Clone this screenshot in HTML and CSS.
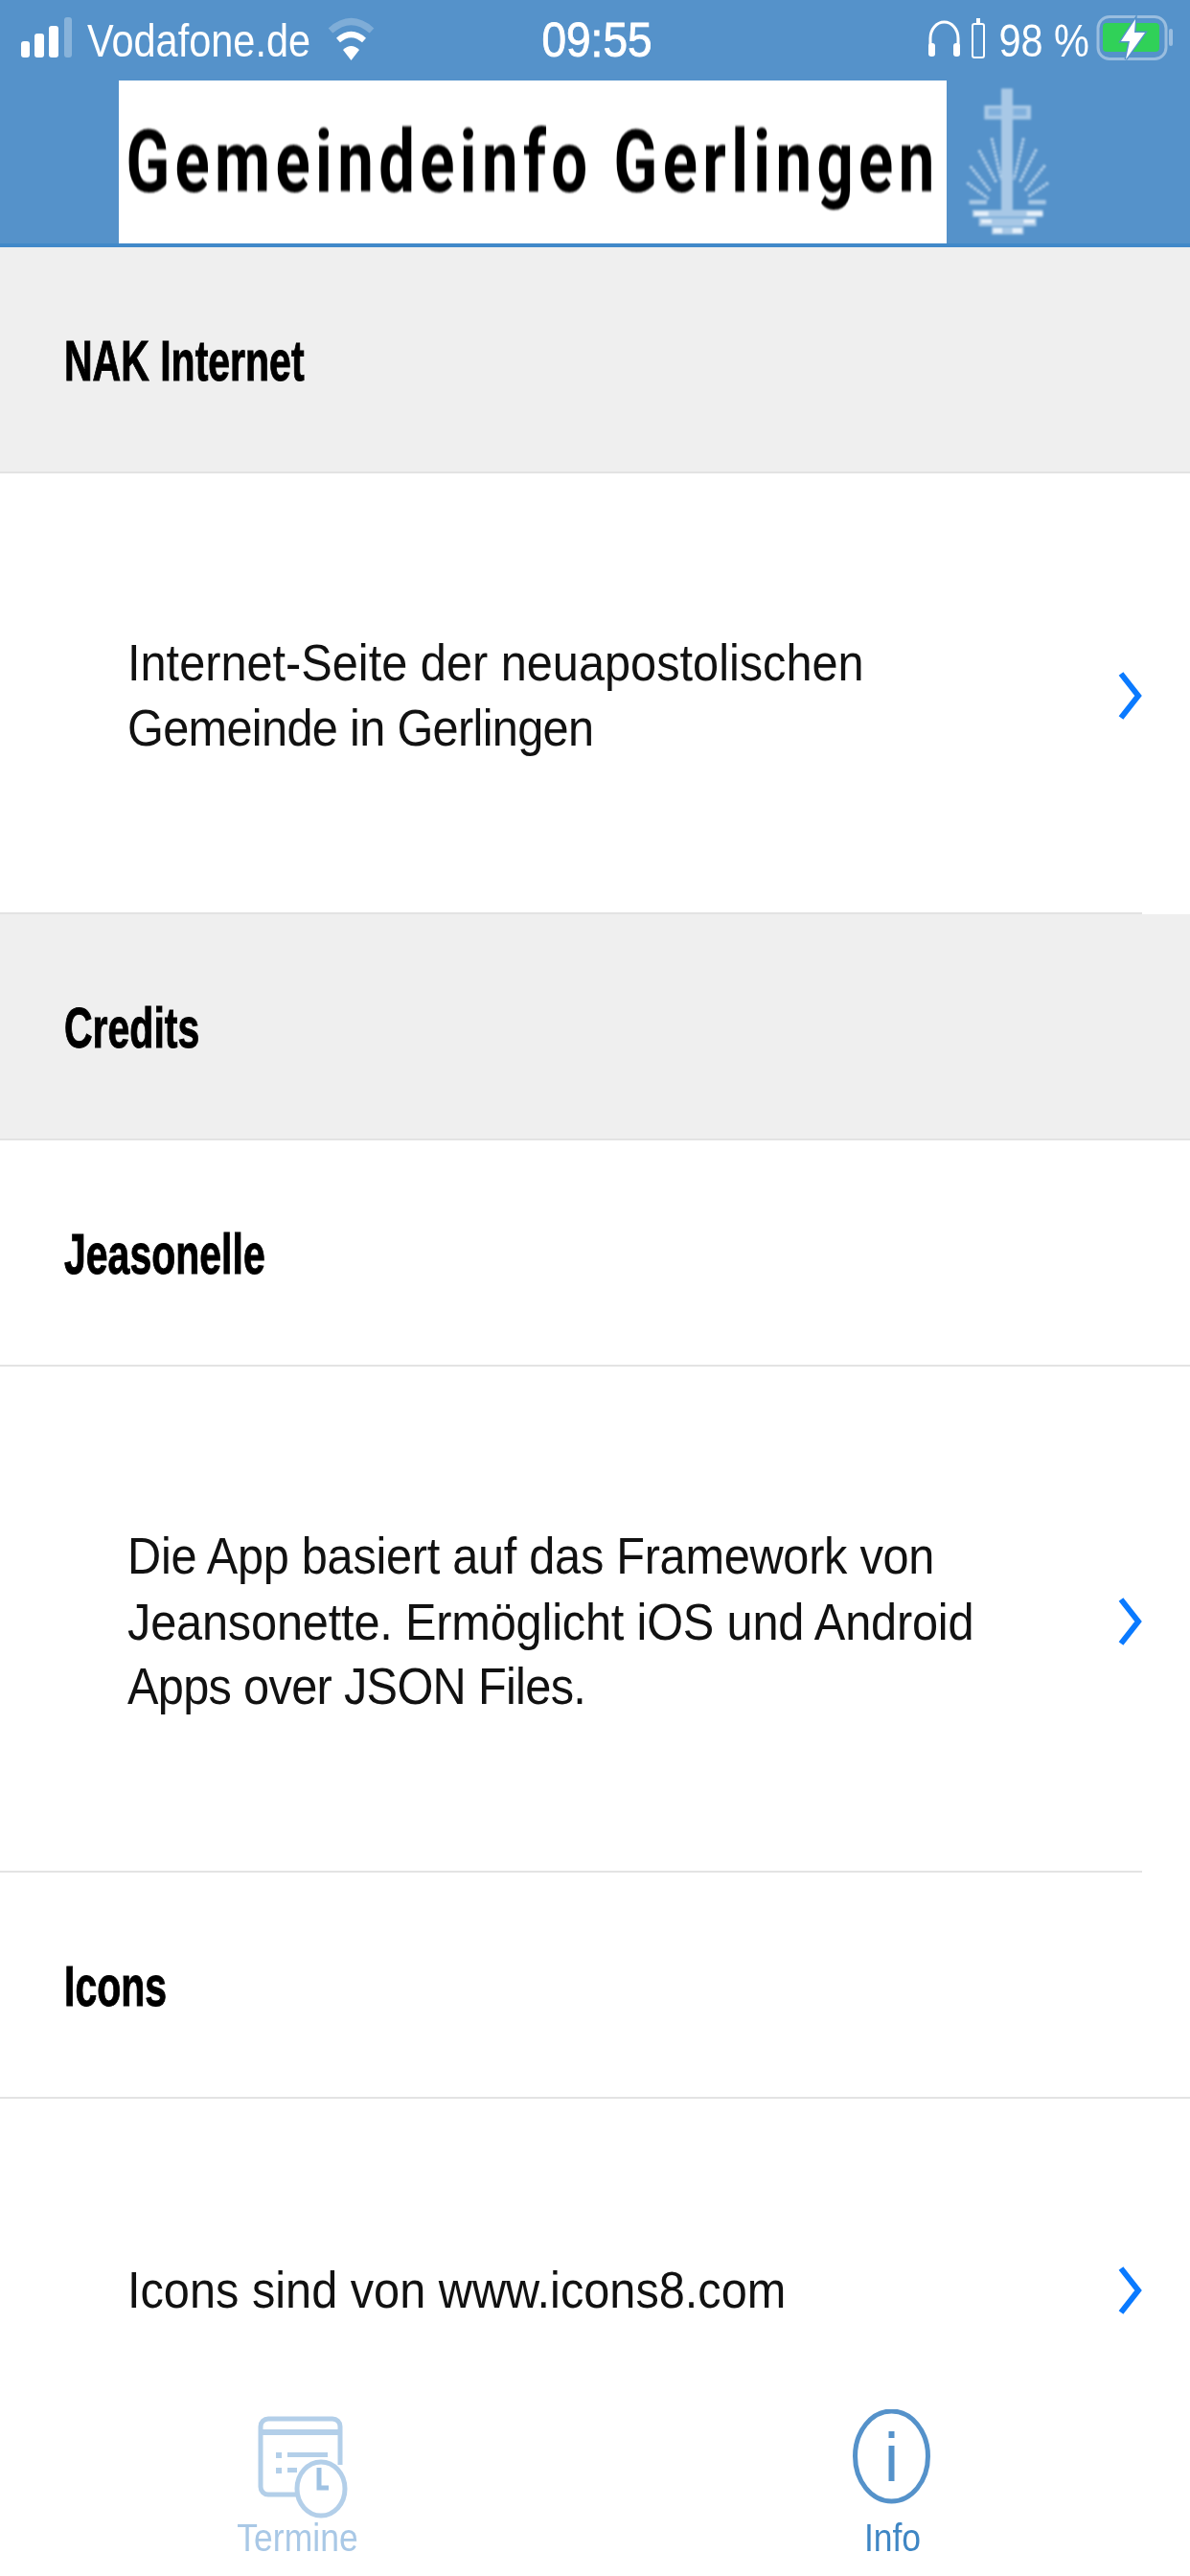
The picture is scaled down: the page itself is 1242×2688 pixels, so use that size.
FILE: index.html
```html
<!DOCTYPE html>
<html lang="de">
<head>
  <meta charset="UTF-8">
  <title>Gemeindeinfo Gerlingen</title>
  <link rel="stylesheet" href="styles.css">
</head>
<body>
  <div class="screen">
    <header class="header">
      <div class="status-bar">
        <div class="status-left">
          <svg class="signal" viewBox="0 0 53 48" width="53" height="48">
            <rect x="0" y="26" width="9" height="17" rx="3" fill="#fff"/>
            <rect x="14" y="18" width="10" height="25" rx="3" fill="#fff"/>
            <rect x="29" y="10" width="10" height="33" rx="3" fill="#fff"/>
            <rect x="45" y="1" width="8" height="42" rx="3" fill="#fff" opacity="0.3"/>
          </svg>
          <span class="status-text carrier">Vodafone.de</span>
          <svg class="wifi" viewBox="0 0 49 48" width="49" height="48">
            <path d="M3 15 Q24.5 -4 46 15" fill="none" stroke="#fff" stroke-width="7" opacity="0.25"/>
            <path d="M11 25 Q24.5 13 38 25" fill="none" stroke="#fff" stroke-width="6"/>
            <path d="M16 35 Q24.5 27 33 35 L24.5 46 Z" fill="#fff"/>
          </svg>
        </div>
        <span class="status-text time">09:55</span>
        <div class="status-right">
          <svg class="headphones" viewBox="0 0 35 48" width="35" height="48">
            <path d="M3 38 V23 a14.5 17 0 0 1 29 0 V38" fill="none" stroke="#fff" stroke-width="3"/>
            <rect x="1" y="28" width="7" height="14" rx="3" fill="#fff"/>
            <rect x="27" y="28" width="7" height="14" rx="3" fill="#fff"/>
          </svg>
          <svg class="small-battery" viewBox="0 0 14 48" width="14" height="48">
            <rect x="5" y="2" width="4" height="6" fill="#fff"/>
            <rect x="1" y="8" width="12" height="35" rx="2" fill="none" stroke="#fff" stroke-width="2"/>
          </svg>
          <span class="status-text percent">98 %</span>
          <svg class="battery" viewBox="0 0 80 50" width="80" height="50">
            <rect x="2" y="1.5" width="71" height="44" rx="12" fill="none" stroke="#fff" stroke-width="3" opacity="0.4"/>
            <rect x="7" y="8" width="59" height="30" rx="4" fill="#30d158"/>
            <rect x="76" y="14" width="4" height="18" rx="2" fill="#fff" opacity="0.4"/>
            <path d="M41 4 L26 27 L35 27 L31 46 L51 18 L40 18 Z" fill="#fff" stroke="#5592ca" stroke-width="3" paint-order="stroke"/>
          </svg>
        </div>
      </div>
      <div class="logo-row">
        <div class="logo"><span class="logo-text">Gemeindeinfo Gerlingen</span></div>
        <svg class="emblem" viewBox="0 0 360 510" width="120" height="170">
          <g fill="#a8c8e6">
            <rect x="165" y="25" width="36" height="380"/>
            <rect x="112" y="78" width="146" height="44"/>
          </g>
          <rect x="125" y="88" width="40" height="22" fill="#7fafdc"/>
          <rect x="202" y="88" width="42" height="22" fill="#7fafdc"/>
          <g fill="none" stroke="#b4d0ea" stroke-width="9" stroke-dasharray="10 3">
            <path d="M135 180 L165 310"/>
            <path d="M235 180 L205 310"/>
            <path d="M95 218 L150 320"/>
            <path d="M275 215 L222 320"/>
            <path d="M68 268 L130 345"/>
            <path d="M302 265 L240 345"/>
            <path d="M58 320 L125 370"/>
            <path d="M312 320 L248 365"/>
          </g>
          <g fill="#a8c8e6">
            <rect x="65" y="374" width="55" height="14"/>
            <rect x="250" y="374" width="55" height="14"/>
            <rect x="75" y="405" width="220" height="22"/>
            <rect x="95" y="430" width="180" height="26"/>
            <rect x="135" y="458" width="100" height="24"/>
          </g>
          <g fill="#e6f0fa">
            <rect x="80" y="410" width="45" height="14"/>
            <rect x="245" y="410" width="50" height="14"/>
            <rect x="102" y="435" width="33" height="12"/>
            <rect x="235" y="435" width="35" height="12"/>
            <rect x="140" y="462" width="28" height="16"/>
            <rect x="200" y="462" width="30" height="16"/>
          </g>
        </svg>
      </div>
    </header>

    <main class="list">
      <div class="section"><span class="heading">NAK Internet</span></div>
      <div class="row row-two">
        <p class="row-text">Internet-Seite der neuapostolischen<br><span class="tight-3">Gemeinde in Gerlingen</span></p>
        <svg class="chevron" viewBox="0 0 25 52" width="25" height="52"><path d="M3 3 L21 26 L3 49" fill="none" stroke="#0a7aff" stroke-width="6"/></svg>
      </div>
      <div class="section"><span class="heading">Credits</span></div>
      <div class="title-row"><span class="heading">Jeasonelle</span></div>
      <div class="row row-three">
        <p class="row-text"><span class="tight-1">Die App basiert auf das Framework von</span><br><span class="tight-2">Jeansonette. Ermöglicht iOS und Android</span><br><span class="tight-3">Apps over JSON Files.</span></p>
        <svg class="chevron" viewBox="0 0 25 52" width="25" height="52"><path d="M3 3 L21 26 L3 49" fill="none" stroke="#0a7aff" stroke-width="6"/></svg>
      </div>
      <div class="title-row"><span class="heading">Icons</span></div>
      <div class="row row-one">
        <p class="row-text">Icons sind von www.icons8.com</p>
        <svg class="chevron" viewBox="0 0 25 52" width="25" height="52"><path d="M3 3 L21 26 L3 49" fill="none" stroke="#0a7aff" stroke-width="6"/></svg>
      </div>
    </main>

    <nav class="tab-bar">
      <div class="tab tab-off">
        <svg viewBox="250 2514 120 116" width="120" height="116">
          <g fill="none" stroke="#b3cfe9" stroke-width="5">
            <path d="M308 2603 H279 a8 8 0 0 1 -8 -8 V2532 a8 8 0 0 1 8 -8 H346 a8 8 0 0 1 8 8 V2572"/>
            <path d="M271 2538 H354" stroke-width="6"/>
            <ellipse cx="334" cy="2597" rx="25" ry="28"/>
          </g>
          <g fill="#b3cfe9">
            <rect x="287" y="2559" width="6" height="6"/>
            <rect x="287" y="2575" width="6" height="6"/>
            <rect x="299" y="2559" width="42" height="5"/>
            <rect x="299" y="2575" width="10" height="5"/>
          </g>
          <path d="M332 2575 V2596 H342" fill="none" stroke="#9fc2e3" stroke-width="5"/>
        </svg>
        <span class="tab-label">Termine</span>
      </div>
      <div class="tab tab-on">
        <svg viewBox="871.5 2514 120 116" width="120" height="116">
          <ellipse cx="930" cy="2563" rx="38" ry="47" fill="none" stroke="#5592ca" stroke-width="5"/>
          <rect x="927" y="2537" width="6" height="7" fill="#5592ca"/>
          <rect x="927" y="2552" width="6" height="37" fill="#5592ca"/>
        </svg>
        <span class="tab-label">Info</span>
      </div>
    </nav>
  </div>
</body>
</html>
```

FILE: styles.css
```css
html, body {
  margin: 0;
  padding: 0;
  background: #fff;
  font-family: 'Liberation Sans', Arial, sans-serif;
  color: #000;
}
.screen {
  width: 1242px;
  height: 2688px;
  display: flex;
  flex-direction: column;
  overflow: hidden;
}

/* header */
.header {
  flex: none;
  background: #5592ca;
  border-bottom: 4px solid #4189c9;
}
.status-bar {
  height: 82px;
  padding: 0 18px 2px 22px;
  display: grid;
  grid-template-columns: 1fr auto 1fr;
  align-items: center;
}
.status-left, .status-right {
  display: flex;
  align-items: center;
}
.status-right {
  justify-content: flex-end;
}
.status-text {
  display: block;
  margin-top: 2px;
  color: #fff;
  font-size: 41.5px;
  line-height: 48px;
  transform: scaleY(1.18);
}
.carrier {
  margin-left: 16px;
  margin-right: 18px;
}
.time {
  font-size: 46px;
  -webkit-text-stroke: 0.8px #fff;
  transform: scaleY(1.07);
}
.small-battery {
  margin-left: 11px;
  margin-right: 14px;
}
.percent {
  margin-right: 7px;
}
.logo-row {
  height: 170px;
  padding-left: 124px;
  display: flex;
}
.logo {
  width: 864px;
  background: #fff;
  display: flex;
  align-items: center;
  justify-content: center;
}
.logo-text {
  font-family: Roboto, sans-serif;
  font-weight: 700;
  font-size: 67px;
  letter-spacing: 5.4px;
  white-space: nowrap;
  transform: scaleY(1.36);
  filter: blur(0.7px);
}
.emblem {
  margin-left: 2px;
  filter: blur(1px);
}

/* list */
.list {
  flex: 1;
  min-height: 0;
  overflow: hidden;
}
.section, .title-row {
  box-sizing: border-box;
  height: 236px;
  padding: 5px 0 0 67px;
  display: flex;
  align-items: center;
  border-bottom: 2px solid #e3e3e3;
}
.section {
  background: #efefef;
}
.heading {
  display: block;
  font-size: 41px;
  font-weight: 700;
  -webkit-text-stroke: 0.7px #000;
  transform: scaleY(1.46);
}
.row {
  box-sizing: border-box;
  margin-right: 50px;
  padding: 5px 0 0 133px;
  display: flex;
  align-items: center;
  justify-content: space-between;
  border-bottom: 2px solid #e3e3e3;
}
.row-two { height: 460px; }
.row-three { height: 528px; }
.row-one { height: 394px; border-bottom: none; }
.row-text {
  margin: 0;
  font-size: 48.7px;
  line-height: 62.6px;
  color: #111;
  white-space: nowrap;
  transform: scaleY(1.09);
}
/* SF runs a little narrower than Liberation on these lines */
.tight-1 { letter-spacing: -0.28px; }
.tight-2 { letter-spacing: -0.18px; }
.tight-3 { letter-spacing: -0.68px; }
.chevron {
  flex: none;
}

/* tab bar */
.tab-bar {
  flex: none;
  box-sizing: border-box;
  height: 208px;
  padding-top: 34px;
  background: #fff;
  display: grid;
  grid-template-columns: 1fr 1fr;
}
.tab {
  display: flex;
  flex-direction: column;
  align-items: center;
}
.tab-label {
  display: block;
  font-size: 35.5px;
  line-height: 38px;
  transform: scaleY(1.12);
}
.tab-off .tab-label { color: #a9c8e6; }
.tab-on .tab-label { color: #3f86c4; }
```
